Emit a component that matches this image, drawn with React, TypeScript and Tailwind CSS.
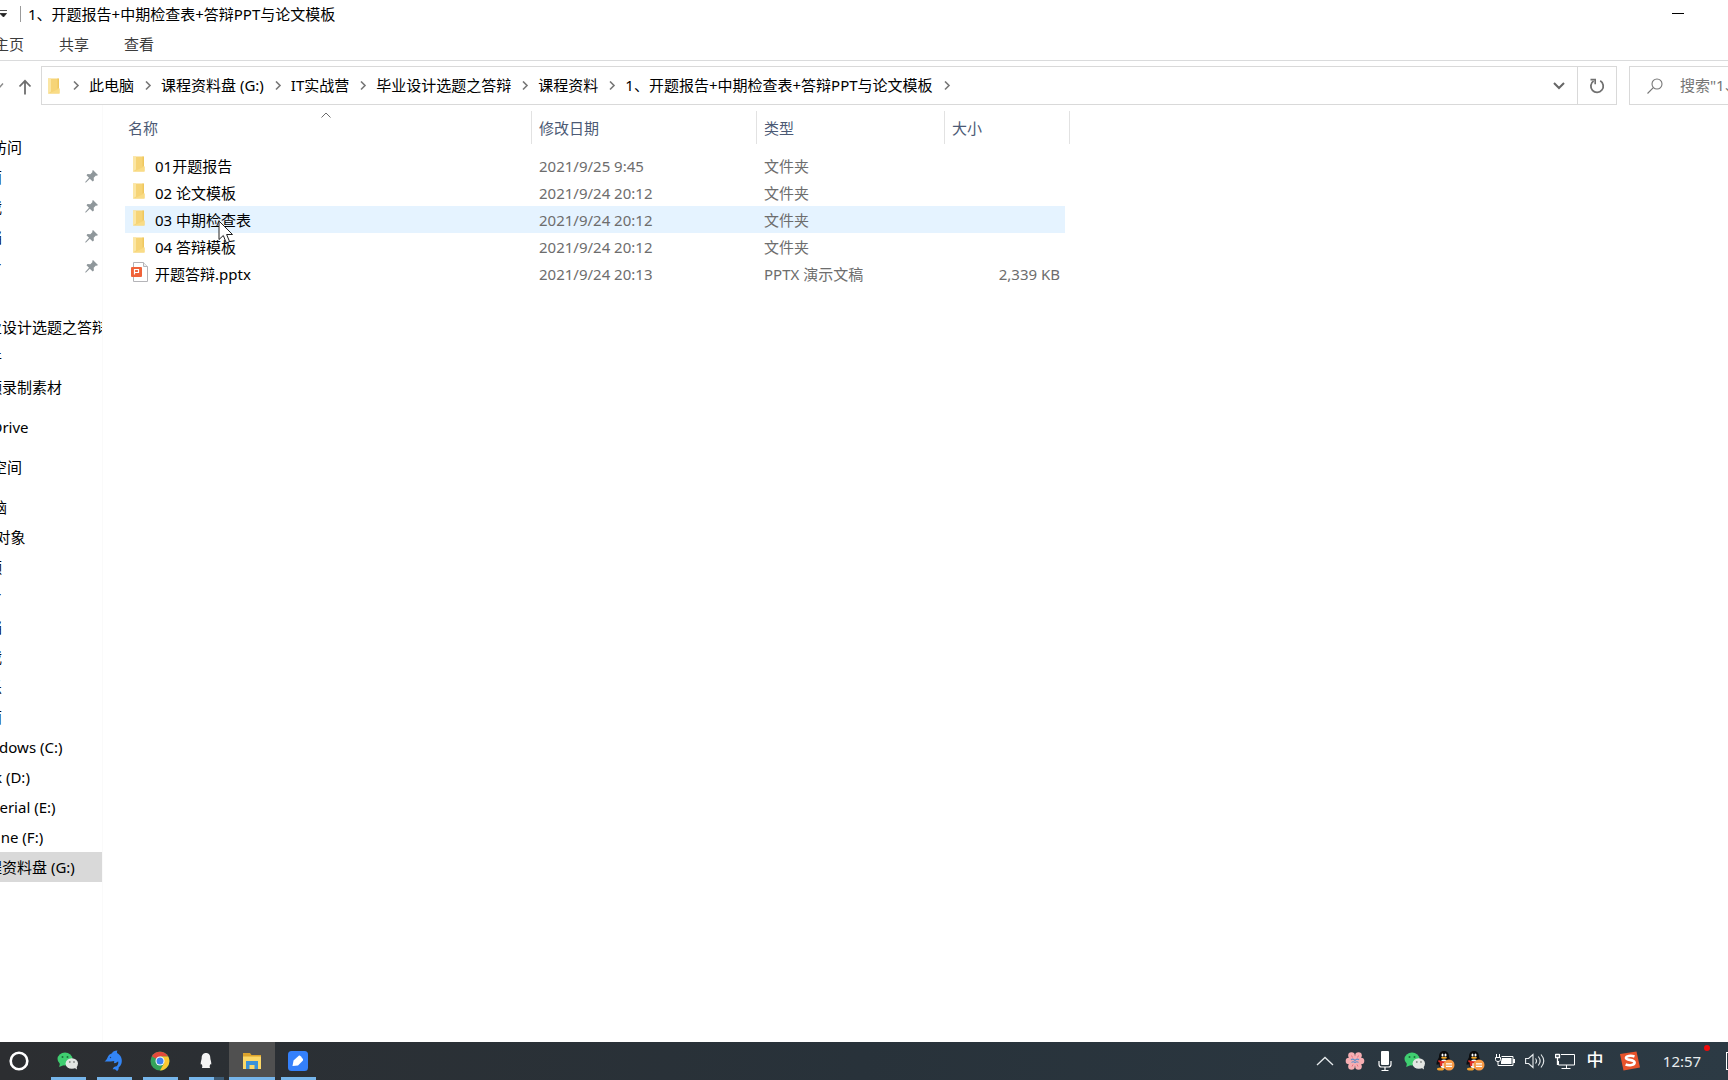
import type { ReactNode } from "react";
import clsx from "clsx";

type NavItem = { label: string; pinned?: boolean; active?: boolean; root?: boolean };

const navGroups: { gap: string; items: NavItem[] }[] = [
  {
    gap: "mt-[27px]",
    items: [
      { label: "快速访问", root: true },
      { label: "桌面", pinned: true },
      { label: "下载", pinned: true },
      { label: "文档", pinned: true },
      { label: "图片", pinned: true },
    ],
  },
  {
    gap: "mt-[30px]",
    items: [{ label: "毕业设计选题之答辩" }, { label: "软件" }, { label: "视频录制素材" }],
  },
  { gap: "mt-[10px]", items: [{ label: "OneDrive", root: true }] },
  { gap: "mt-[10px]", items: [{ label: "工作空间", root: true }] },
  {
    gap: "mt-[10px]",
    items: [
      { label: "此电脑", root: true },
      { label: "3D 对象" },
      { label: "视频" },
      { label: "图片" },
      { label: "文档" },
      { label: "下载" },
      { label: "音乐" },
      { label: "桌面" },
      { label: "Windows (C:)" },
      { label: "Disk (D:)" },
      { label: "Material (E:)" },
      { label: "Online (F:)" },
      { label: "课程资料盘 (G:)", active: true },
    ],
  },
];

const crumbs = ["此电脑", "课程资料盘 (G:)", "IT实战营", "毕业设计选题之答辩", "课程资料", "1、开题报告+中期检查表+答辩PPT与论文模板"];

const files = [
  { name: "01开题报告", date: "2021/9/25 9:45", type: "文件夹", size: "" },
  { name: "02 论文模板", date: "2021/9/24 20:12", type: "文件夹", size: "" },
  { name: "03 中期检查表", date: "2021/9/24 20:12", type: "文件夹", size: "", hover: true },
  { name: "04 答辩模板", date: "2021/9/24 20:12", type: "文件夹", size: "" },
  { name: "开题答辩.pptx", date: "2021/9/24 20:13", type: "PPTX 演示文稿", size: "2,339 KB", ppt: true },
];

function FolderIcon() {
  return (
    <svg width="14" height="16" viewBox="0 0 14 16" className="shrink-0">
      <path d="M1 .5h10.500v10h1V15.500H1z" fill="#f6d477" />
      <path d="M1 .5h3v13l-3 2z" fill="#fbe6a4" />
      <path d="M10.500.5h1.500v10h-1.500z" fill="#efc75e" />
      <path d="M4 14.500l8.500-4v5H1z" fill="#f9dc86" />
    </svg>
  );
}

function PptIcon() {
  return (
    <svg width="18" height="20" viewBox="0 0 18 20" className="shrink-0">
      <path d="M2.500.500h10l4 4v15h-14z" fill="#fff" stroke="#b4b4b8" />
      <path d="M12.500.500v4h4" fill="#eee" stroke="#b4b4b8" />
      <rect x="0" y="5" width="11" height="10" rx="1" fill="#f0633a" />
      <path d="M3.500 12.500V7.500H7.500V10.500H3.500" fill="none" stroke="#fff" strokeWidth="1.200" />
    </svg>
  );
}

function PinIcon() {
  return (
    <svg width="13" height="13" viewBox="0 0 13 13">
      <path d="M8 0l5 5-1.200.700-.900-.200-2.200 2.300.200 2.700-1.200 1L4.800 8.700 1 12.500l-.700-.100L.200 12 4 7.800 1.500 5.200l1-1.200 2.800.300L7.500 2 7.200.900z" fill="#8f979b" />
    </svg>
  );
}

function Chevron() {
  return (
    <svg width="27" height="10" viewBox="0 0 27 10" className="shrink-0" fill="none" stroke="#777" strokeWidth="1.600">
      <path d="M12 .5l4 4-4 4" />
    </svg>
  );
}

function WeChatIcon() {
  return (
    <svg width="22" height="18" viewBox="0 0 22 18">
      <ellipse cx="8" cy="7" rx="7.500" ry="6.500" fill="#3fce70" />
      <path d="M3 11l-.800 4L7 13z" fill="#3fce70" />
      <circle cx="5.500" cy="5" r="1" fill="#1d6f3b" />
      <circle cx="10.500" cy="5" r="1" fill="#1d6f3b" />
      <ellipse cx="14.800" cy="11.500" rx="6.200" ry="5.300" fill="#e3e6e3" />
      <path d="M17 15.500l3 2-.500-4z" fill="#e3e6e3" />
      <circle cx="12.800" cy="10" r=".9" fill="#858a86" />
      <circle cx="17" cy="10" r=".9" fill="#858a86" />
    </svg>
  );
}

function DolphinIcon() {
  return (
    <svg width="20" height="22" viewBox="0 0 20 22">
      <path
        d="M.5 11.500C2 10.300 2.800 9.500 3.300 8 4.200 5.200 6 4 8 3.300 8.800 1.500 10.500.600 13.500.500c-.700 1-.700 1.800-.200 2.700C16.800 5 18.600 9 17.600 13c-.5 2-1.500 3.300-2.900 4.300.2 1.500-.3 2.900-1.700 4-.6-1.600-1.700-2.200-4.300-2.100.5-2 2-2.800 4-3 1.500-1.700 1.900-3.200 1.400-4.900-1 1.200-2 1.700-3.600 2-.7-.8-.6-1.500-.1-2.400-3 .5-6.200.8-9.900.6z"
        fill="#3385f5"
      />
      <circle cx="6.500" cy="7.500" r=".7" fill="#1c3d6e" />
    </svg>
  );
}

function ChromeIcon() {
  return (
    <svg width="20" height="20" viewBox="0 0 20 20">
      <circle cx="10" cy="10" r="9.500" fill="#34a35a" />
      <path d="M10 10L1.800 5.200A9.500 9.500 0 0118.200 5.500H10z" fill="#e24a3b" />
      <path d="M10 5.500h8.200A9.500 9.500 0 0110 19.500l4-7.200z" fill="#fbc931" />
      <circle cx="10" cy="10" r="4.500" fill="#fff" />
      <circle cx="10" cy="10" r="3.500" fill="#3f83ee" />
    </svg>
  );
}

function QqWhiteIcon() {
  return (
    <svg width="14" height="18" viewBox="0 0 14 18">
      <path d="M7 1c3 0 4.300 2.200 4.300 5 0 1.500 1.200 3.700 1 6.200-.3.600-.7.200-1-.2-.2 1.200-.5 1.700-.8 2.200.6.600.7 1.200.2 1.800H3.300c-.5-.6-.4-1.200.2-1.800-.3-.5-.6-1-.8-2.200-.3.400-.7.800-1 .2C1.500 9.700 2.700 7.500 2.700 6 2.700 3.200 4 1 7 1z" fill="#f4f4f4" />
    </svg>
  );
}

function ExplorerIcon() {
  return (
    <svg width="20" height="18" viewBox="0 0 20 18">
      <path d="M1 1h7l1.500 2H19v13H1z" fill="#dca32c" />
      <path d="M1 4.500h18V17H1z" fill="#fbd767" />
      <path d="M4 17V9h12v8h-3.500v-4h-5v4z" fill="#3a91d8" />
    </svg>
  );
}

function NoteIcon() {
  return (
    <svg width="20" height="20" viewBox="0 0 20 20">
      <rect width="20" height="20" rx="3.500" fill="#3480fb" />
      <path d="M4.500 15l1-5.500 5-4.500c.8-.7 1.500-.5 2.200.3l2 2.500c.6.800.5 1.500-.2 2.200L10 14.500z" fill="#fff" />
    </svg>
  );
}

function PenguinIcon() {
  return (
    <svg width="20" height="20" viewBox="0 0 20 20">
      <path d="M9 0c3.500 0 5 2.500 5 5.500 0 2 2.500 4 2.500 8-.5.500-1.500 0-2-.5-.5 2.500-2 4.500-5.500 4.500S4 16 3.500 13c-.5.500-1.500 1-2 .5 0-4 2.500-6 2.500-8C4 2.500 5.500 0 9 0z" fill="#0c0c0e" />
      <ellipse cx="9" cy="13" rx="4" ry="4.500" fill="#f5f5f5" />
      <ellipse cx="7.500" cy="4" rx="1" ry="1.500" fill="#fff" />
      <ellipse cx="10.500" cy="4" rx="1" ry="1.500" fill="#fff" />
      <ellipse cx="9" cy="6.800" rx="3" ry="1" fill="#f5a623" />
      <path d="M3.500 9c3.500 1.800 7.500 1.800 11 0l.3 2c-2.500 1.200-5 1.500-7.500 1.200V15H4.800v-3.500L3.300 11z" fill="#dd2a22" />
      <ellipse cx="5.500" cy="18" rx="3.500" ry="1.500" fill="#f0a02c" />
      <circle cx="14" cy="14" r="5.500" fill="#f79a46" />
      <path d="M11 12.800h6M11 15.300h6" stroke="#fff" strokeWidth="1.300" />
    </svg>
  );
}

function FlowerIcon() {
  return (
    <svg width="20" height="20" viewBox="0 0 20 20">
      <g fill="#f6aeb2">
        <circle cx="6.500" cy="4.500" r="3.300" />
        <circle cx="13.500" cy="4.500" r="3.300" />
        <circle cx="4" cy="10" r="3.300" />
        <circle cx="16" cy="10" r="3.300" />
        <circle cx="6.500" cy="15.500" r="3.300" />
        <circle cx="13.500" cy="15.500" r="3.300" />
        <circle cx="10" cy="10" r="5" />
      </g>
      <path d="M6 9c1.300-1.500 2.500-1 4 .5 1.500-1.500 2.700-2 4-.5M6.500 11.500c1.200-1.300 2.200-1 3.500 0 1.300-1 2.300-1.300 3.500 0" fill="none" stroke="#5d8fca" strokeWidth="1.100" />
      <path d="M6.500 4.500L7.500 6.500M13.500 4.500L12.500 6.500M7 15.500l1-2M13 15.500l-1-2" stroke="#e8707f" />
    </svg>
  );
}

function MicIcon() {
  return (
    <svg width="14" height="20" viewBox="0 0 14 20">
      <rect x="3" y="0" width="8" height="14" rx="1" fill="#fff" />
      <path d="M1 10v3.500c0 1.500 1 2.500 2.500 2.500h7c1.500 0 2.500-1 2.500-2.500V10M7 16v3M3.500 19.500h7" fill="none" stroke="#fff" strokeWidth="1.200" />
    </svg>
  );
}

function BatteryIcon() {
  return (
    <svg width="20" height="16" viewBox="0 0 20 16">
      <path d="M1.500 1v3M4.500 1v3M.500 4.500h5v2c0 1.300-1 2-2.500 2s-2.500-.7-2.500-2zM3 8.500v4h3" fill="none" stroke="#fff" />
      <path d="M6.500 3.500h11.500v9h-12" fill="none" stroke="#fff" />
      <path d="M7 5h9.500v6H6V8.500z" fill="#fff" />
      <path d="M18 6h2v4h-2z" fill="#fff" />
    </svg>
  );
}

function VolumeIcon() {
  return (
    <svg width="20" height="16" viewBox="0 0 20 16" fill="none" stroke="#e9edef" strokeWidth="1.100">
      <path d="M.600 5.500h3L8 1.500v13l-4.400-4H.600z" />
      <path d="M10.500 5.500c1.200 1.500 1.200 3.500 0 5M13.300 3.500c2.200 2.700 2.200 6.300 0 9M16 1.500c3.400 4 3.400 9 0 13" />
    </svg>
  );
}

function NetworkIcon() {
  return (
    <svg width="20" height="17" viewBox="0 0 20 17" fill="none" stroke="#fff">
      <path d="M6 1.500h13.500v10.500H3.500V8M11.500 12v3.500M6.500 15.500h9" />
      <path d="M.500 1v3.500h4V1M.500 1.500h4M2.500 4.500V12" strokeWidth="1.300" />
    </svg>
  );
}

function SogouIcon() {
  return (
    <svg width="22" height="20" viewBox="0 0 22 20">
      <path d="M1 3L17.500.500l3.500 16L4.500 19.500z" fill="#e8532b" />
      <path d="M15.500 5.500C12 4.200 6.500 4.800 7 7.300c.4 2 8.300 1.200 8.600 4 .2 2.900-5.600 3.600-9 2.200" fill="none" stroke="#fff" strokeWidth="2.600" />
    </svg>
  );
}

function TaskButton({ label, children, active, stacked }: { label: string; children: ReactNode; active?: boolean; stacked?: boolean }) {
  return (
    <button aria-label={label} className={clsx("flex w-[46px] flex-col items-center", active && "bg-[#505050]")}>
      <span className="flex flex-1 items-center pt-[3px]">{children}</span>
      <span className={clsx("flex h-[3px]", active ? "w-full" : "w-[35px]")}>
        <span className="flex-1 bg-[#76b5ea]" />
        {stacked && <span className="w-[10px] bg-[#3c5a74]" />}
      </span>
    </button>
  );
}

function TrayButton({ label, children }: { label: string; children: ReactNode }) {
  return (
    <button aria-label={label} className="flex w-[30px] items-center justify-center">
      {children}
    </button>
  );
}

function Sidebar() {
  return (
    <nav className="w-[103px] shrink-0 overflow-hidden border-r border-[#fafafa]">
      {navGroups.map((group, i) => (
        <ul key={i} className={group.gap}>
          {group.items.map((item) => (
            <li key={item.label} className={clsx("relative h-[30px] overflow-hidden", item.active && "bg-[#d9d9d9]")}>
              <a href="#" className={clsx("block leading-[30px] whitespace-nowrap", item.root ? "-ml-[38px]" : "-ml-7")}>
                {item.label}
              </a>
              {item.pinned && (
                <span className="absolute top-2 right-1">
                  <PinIcon />
                </span>
              )}
            </li>
          ))}
        </ul>
      ))}
    </nav>
  );
}

function HeadCell({ children, colSpan, sorted }: { children: ReactNode; colSpan?: number; sorted?: boolean }) {
  return (
    <th colSpan={colSpan} className="relative p-0 pb-2 text-left font-normal text-[#4c5a75]">
      <div className={clsx("h-[33px] border-r border-[#e2e2e2] pt-px leading-8", sorted ? "pl-[3px]" : "pl-[7px]")}>{children}</div>
      {sorted && (
        <svg width="10" height="6" viewBox="0 0 10 6" className="absolute top-px left-1/2 -translate-x-2" fill="none" stroke="#6b6b6b">
          <path d="M.500 5.500L5 1l4.500 4.500" />
        </svg>
      )}
    </th>
  );
}

function FileTable() {
  return (
    <div className="relative mt-[6px] ml-[22px]">
      <table className="w-[945px] table-fixed border-collapse">
        <colgroup>
          <col className="w-[407px]" />
          <col className="w-[225px]" />
          <col className="w-[188px]" />
          <col className="w-[120px]" />
          <col className="w-[5px]" />
        </colgroup>
        <thead>
          <tr>
            <HeadCell sorted>名称</HeadCell>
            <HeadCell>修改日期</HeadCell>
            <HeadCell>类型</HeadCell>
            <HeadCell colSpan={2}>大小</HeadCell>
          </tr>
        </thead>
        <tbody className="text-[#6d6d6d]">
          {files.map((file) => (
            <tr key={file.name} className="h-[27px] leading-[25px]">
              <td className={clsx("p-0", file.hover && "bg-[#e5f3ff]")}>
                <div className="flex h-[27px] items-center text-black">
                  <span className={clsx("flex w-[30px] pb-[3px]", file.ppt ? "pl-[6px]" : "pl-[7px]")}>{file.ppt ? <PptIcon /> : <FolderIcon />}</span>
                  <span className="pt-[2px]">{file.name}</span>
                </div>
              </td>
              <td className={clsx("p-0 pt-[2px] pl-[7px]", file.hover && "bg-[#e5f3ff]")}>{file.date}</td>
              <td className={clsx("p-0 pt-[2px] pl-[7px]", file.hover && "bg-[#e5f3ff]")}>{file.type}</td>
              <td className={clsx("p-0 pt-[2px] pr-[5px] text-right", file.hover && "bg-[#e5f3ff]")}>{file.size}</td>
              <td className="p-0" />
            </tr>
          ))}
        </tbody>
      </table>
      {/* mouse pointer over the hovered row */}
      <svg width="17" height="25" viewBox="0 0 17 25" className="absolute top-[109px] left-[93px]">
        <path d="M1 1v18.500l4.300-4 3 7.500 3.300-1.400-3-7.100h5.900z" fill="#fff" stroke="#222" />
      </svg>
    </div>
  );
}

export default function App() {
  return (
    <div className="flex min-h-screen flex-col overflow-hidden bg-white font-['Noto_Sans','Noto_Sans_CJK_SC',sans-serif] text-[15px] text-black">
      <header className="flex h-[30px] items-center pb-[2px]">
        <button aria-label="自定义快速访问工具栏">
          <svg width="8" height="8" viewBox="0 0 8 8">
            <path d="M0 .500h7M0 3.500h6.500L3.500 7z" fill="#222" stroke="#222" strokeWidth=".8" />
          </svg>
        </button>
        <span className="ml-3 h-4 w-px bg-[#9a9a9a]" />
        <h1 className="ml-[7px] flex-1">1、开题报告+中期检查表+答辩PPT与论文模板</h1>
        <button aria-label="最小化" className="mr-11 mb-[2px] h-px w-3 bg-black" />
      </header>
      <div className="-ml-[6px] flex h-[31px] items-start gap-[35px] border-b border-[#dadbdc] leading-7 text-[#3c3c3c]">
        <button>主页</button>
        <button>共享</button>
        <button>查看</button>
      </div>

      <div className="mt-[5px] flex h-[39px] items-stretch">
        <button aria-label="最近位置" className="w-[10px]">
          <svg width="10" height="8" viewBox="0 0 10 8" fill="none" stroke="#8a8a8a" strokeWidth="1.400">
            <path d="M-4 1.500l3.500 4L3 1.500" />
          </svg>
        </button>
        <button aria-label="上移" className="flex w-[31px] items-center justify-center pt-[2px] pr-[2px]">
          <svg width="14" height="16" viewBox="0 0 14 16" fill="none" stroke="#6e6e6e" strokeWidth="1.800">
            <path d="M7 15.500V2M1.500 7.500L7 1.800l5.500 5.700" />
          </svg>
        </button>
        <div className="flex flex-1 items-center border border-[#d9d9d9] pl-[5px]">
          <FolderIcon />
          <span className="ml-px flex">
            <Chevron />
          </span>
          {crumbs.map((crumb) => (
            <span key={crumb} className="flex items-center">
              <a href="#" className="whitespace-nowrap">
                {crumb}
              </a>
              <Chevron />
            </span>
          ))}
          <button aria-label="以前的位置" className="mr-3 ml-auto">
            <svg width="12" height="8" viewBox="0 0 12 8" fill="none" stroke="#666" strokeWidth="2">
              <path d="M1 1l5 5 5-5" />
            </svg>
          </button>
          <button aria-label="刷新" className="flex h-full w-[39px] items-center justify-center border-l border-[#d9d9d9]">
            <svg width="16" height="16" viewBox="0 0 16 16" fill="none" stroke="#707070" strokeWidth="1.800">
              <path d="M11.200 2.800a6.200 6.200 0 11-6.600.200" />
              <path d="M1.500 1.600h4.700v4.700" strokeWidth="1.600" />
            </svg>
          </button>
        </div>
        <label className="ml-3 flex w-[99px] items-center overflow-hidden border border-r-0 border-[#d9d9d9] pl-[17px]">
          <svg width="16" height="16" viewBox="0 0 16 16" className="shrink-0" fill="none" stroke="#777" strokeWidth="1.100">
            <circle cx="10" cy="6" r="5" />
            <path d="M6.300 9.700L.500 15.500" />
          </svg>
          <input aria-label="搜索" placeholder={'搜索"1、开题报告"'} className="ml-[17px] w-full shrink-0 outline-none placeholder:text-[#767676]" />
        </label>
      </div>

      <main className="flex flex-1">
        <Sidebar />
        <FileTable />
      </main>

      <footer className="flex h-[38px] bg-linear-to-r from-[#2c2e31] via-[#28323a] to-[#2c3a44]">
        <button aria-label="Cortana" className="flex w-[45px] items-center pl-[9px]">
          <svg width="20" height="20" viewBox="0 0 20 20">
            <circle cx="10" cy="10" r="8.300" fill="none" stroke="#fff" strokeWidth="2.600" />
          </svg>
        </button>
        <TaskButton label="微信"><WeChatIcon /></TaskButton>
        <TaskButton label="海豚"><DolphinIcon /></TaskButton>
        <TaskButton label="Chrome"><ChromeIcon /></TaskButton>
        <TaskButton label="QQ" stacked><QqWhiteIcon /></TaskButton>
        <TaskButton label="文件资源管理器" active><ExplorerIcon /></TaskButton>
        <TaskButton label="笔记"><NoteIcon /></TaskButton>

        <div className="ml-auto flex text-white">
          <TrayButton label="显示隐藏的图标">
            <svg width="18" height="10" viewBox="0 0 18 10" fill="none" stroke="#e6eaec" strokeWidth="1.300">
              <path d="M1 9l8-7.500L17 9" />
            </svg>
          </TrayButton>
          <TrayButton label="花"><FlowerIcon /></TrayButton>
          <TrayButton label="麦克风"><MicIcon /></TrayButton>
          <TrayButton label="微信"><WeChatIcon /></TrayButton>
          <TrayButton label="QQ"><PenguinIcon /></TrayButton>
          <TrayButton label="QQ"><PenguinIcon /></TrayButton>
          <TrayButton label="电池"><BatteryIcon /></TrayButton>
          <TrayButton label="音量"><VolumeIcon /></TrayButton>
          <TrayButton label="网络"><NetworkIcon /></TrayButton>
          <TrayButton label="中文输入"><span className="pb-[2px] text-[17px] font-medium">中</span></TrayButton>
          <button aria-label="搜狗输入法" className="flex w-10 items-center justify-center">
            <SogouIcon />
          </button>
          <button className="relative w-16 text-[#e8ecee]">
            12:57
            <span className="absolute top-[3px] right-1 size-[6px] rounded-full bg-[#f00a0a]" />
          </button>
          <button aria-label="通知" className="flex w-[14px] items-center justify-end overflow-hidden">
            <span className="h-[18px] w-[2px] border border-r-0 border-white" />
          </button>
        </div>
      </footer>
    </div>
  );
}
